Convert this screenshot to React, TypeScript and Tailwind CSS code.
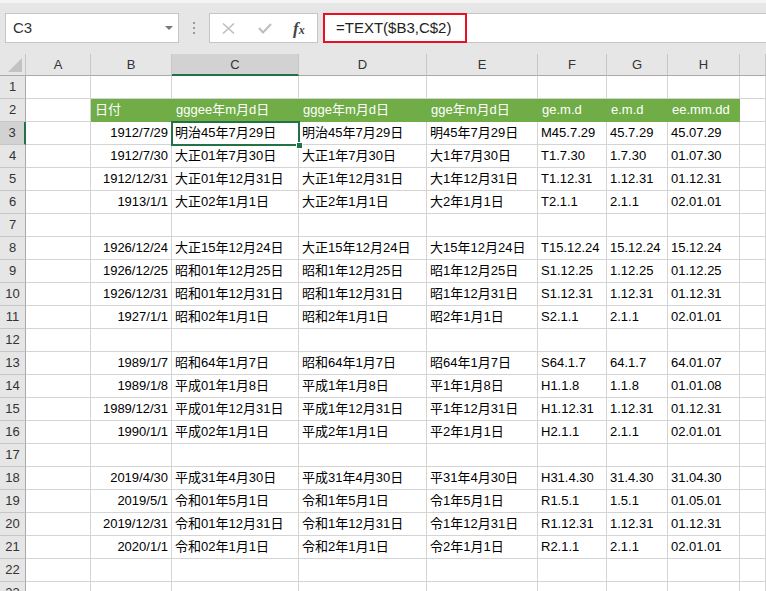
import React from "react";

const FONT = '"Liberation Sans", "Noto Sans CJK JP", sans-serif';

const header = ["日付", "gggee年m月d日", "ggge年m月d日", "gge年m月d日", "ge.m.d", "e.m.d", "ee.mm.dd"];

const data: (string[] | null)[] = [
  ["1912/7/29", "明治45年7月29日", "明治45年7月29日", "明45年7月29日", "M45.7.29", "45.7.29", "45.07.29"],
  ["1912/7/30", "大正01年7月30日", "大正1年7月30日", "大1年7月30日", "T1.7.30", "1.7.30", "01.07.30"],
  ["1912/12/31", "大正01年12月31日", "大正1年12月31日", "大1年12月31日", "T1.12.31", "1.12.31", "01.12.31"],
  ["1913/1/1", "大正02年1月1日", "大正2年1月1日", "大2年1月1日", "T2.1.1", "2.1.1", "02.01.01"],
  null,
  ["1926/12/24", "大正15年12月24日", "大正15年12月24日", "大15年12月24日", "T15.12.24", "15.12.24", "15.12.24"],
  ["1926/12/25", "昭和01年12月25日", "昭和1年12月25日", "昭1年12月25日", "S1.12.25", "1.12.25", "01.12.25"],
  ["1926/12/31", "昭和01年12月31日", "昭和1年12月31日", "昭1年12月31日", "S1.12.31", "1.12.31", "01.12.31"],
  ["1927/1/1", "昭和02年1月1日", "昭和2年1月1日", "昭2年1月1日", "S2.1.1", "2.1.1", "02.01.01"],
  null,
  ["1989/1/7", "昭和64年1月7日", "昭和64年1月7日", "昭64年1月7日", "S64.1.7", "64.1.7", "64.01.07"],
  ["1989/1/8", "平成01年1月8日", "平成1年1月8日", "平1年1月8日", "H1.1.8", "1.1.8", "01.01.08"],
  ["1989/12/31", "平成01年12月31日", "平成1年12月31日", "平1年12月31日", "H1.12.31", "1.12.31", "01.12.31"],
  ["1990/1/1", "平成02年1月1日", "平成2年1月1日", "平2年1月1日", "H2.1.1", "2.1.1", "02.01.01"],
  null,
  ["2019/4/30", "平成31年4月30日", "平成31年4月30日", "平31年4月30日", "H31.4.30", "31.4.30", "31.04.30"],
  ["2019/5/1", "令和01年5月1日", "令和1年5月1日", "令1年5月1日", "R1.5.1", "1.5.1", "01.05.01"],
  ["2019/12/31", "令和01年12月31日", "令和1年12月31日", "令1年12月31日", "R1.12.31", "1.12.31", "01.12.31"],
  ["2020/1/1", "令和02年1月1日", "令和2年1月1日", "令2年1月1日", "R2.1.1", "2.1.1", "02.01.01"],
];

const COLS = ["A", "B", "C", "D", "E", "F", "G", "H", ""];

const cellBase =
  "h-[23px] border-r border-b border-[#d4d4d4] bg-white text-[13px] leading-[22px] whitespace-nowrap overflow-hidden text-black";

function RowHeader({ n }: { n: number }) {
  if (n === 3) {
    return (
      <div className="h-[23px] bg-[#d2d2d2] border-r-2 border-r-[#217346] border-b border-b-[#c6c6c6] text-center text-[13px] leading-[22px] text-[#333]">
        {n}
      </div>
    );
  }
  return (
    <div className="h-[23px] bg-[#e6e6e6] border-r border-r-[#a9a9a9] border-b border-b-[#c6c6c6] text-center text-[13px] leading-[22px] text-[#333]">
      {n}
    </div>
  );
}

function Row({ n }: { n: number }) {
  let vals: string[] | null = null;
  if (n >= 3 && n <= 21) vals = data[n - 3];
  if (n === 2) {
    return (
      <>
        <RowHeader n={n} />
        <div className={cellBase} />
        {header.map((h, i) => (
          <div
            key={i}
            className="h-[23px] border-r border-b border-[#70ad47] bg-[#70ad47] text-white text-[13px] leading-[22px] whitespace-nowrap overflow-hidden pl-[4px]"
          >
            {h}
          </div>
        ))}
        <div className={cellBase} />
      </>
    );
  }
  return (
    <>
      <RowHeader n={n} />
      <div className={cellBase} />
      <div className={`${cellBase} text-right pr-[3px]`}>{vals ? vals[0] : ""}</div>
      <div className={`${cellBase} pl-[3px] ${n === 3 ? "relative overflow-visible" : ""}`}>
        {vals ? vals[1] : ""}
        {n === 3 && (
          <div className="absolute -left-[1px] -top-[1px] w-[129px] h-[25px] border-2 border-[#217346]">
            <div className="absolute -right-[5px] -bottom-[5px] w-[7px] h-[7px] bg-[#217346] border border-white" />
          </div>
        )}
      </div>
      <div className={`${cellBase} pl-[3px]`}>{vals ? vals[2] : ""}</div>
      <div className={`${cellBase} pl-[3px]`}>{vals ? vals[3] : ""}</div>
      <div className={`${cellBase} pl-[3px]`}>{vals ? vals[4] : ""}</div>
      <div className={`${cellBase} pl-[3px]`}>{vals ? vals[5] : ""}</div>
      <div className={`${cellBase} pl-[3px]`}>{vals ? vals[6] : ""}</div>
      <div className={cellBase} />
    </>
  );
}

export default function App() {
  const rowNums = Array.from({ length: 23 }, (_, i) => i + 1);
  return (
    <div className="w-[766px] h-[591px] overflow-hidden bg-white" style={{ fontFamily: FONT }}>
      {/* Formula bar area */}
      <div className="h-[54px] bg-[#e6e6e6]">
        <div className="h-[3px] bg-[#f4f4f4]" />
        <div className="flex items-center mt-[10px] h-[30px]">
          <div className="ml-[5px] w-[174px] h-full bg-white border border-[#c6c6c6] flex items-center justify-between pl-[7px] pr-[5px]">
            <span className="text-[15px] text-[#333]">C3</span>
            <svg width="8" height="4" viewBox="0 0 8 4">
              <polygon points="0,0 8,0 4,4" fill="#777" />
            </svg>
          </div>
          <div className="w-[30px] flex flex-col items-center gap-[3px]">
            <div className="w-[2px] h-[2px] bg-[#9a9a9a]" />
            <div className="w-[2px] h-[2px] bg-[#9a9a9a]" />
            <div className="w-[2px] h-[2px] bg-[#9a9a9a]" />
          </div>
          <div className="w-[109px] h-full bg-white border border-[#c6c6c6] flex items-center pl-[12px]">
            <svg width="13" height="11" viewBox="0 0 13 11">
              <line x1="1" y1="0.5" x2="12" y2="10.5" stroke="#bdbdbd" strokeWidth="1.5" />
              <line x1="12" y1="0.5" x2="1" y2="10.5" stroke="#bdbdbd" strokeWidth="1.5" />
            </svg>
            <svg width="14" height="11" viewBox="0 0 14 11" className="ml-[23px]">
              <polyline points="1,5 5,9.5 13,1" fill="none" stroke="#bdbdbd" strokeWidth="2" />
            </svg>
            <span
              className="ml-[21px] text-[#444] italic leading-none font-bold"
              style={{ fontFamily: '"Liberation Serif", serif' }}
            >
              <span className="text-[17px]">f</span>
              <span className="text-[12px]">x</span>
            </span>
          </div>
          <div className="ml-[5px] flex-1 h-full bg-white border-y border-[#c6c6c6] flex">
            <div className="w-[144px] -my-[1px] h-[30px] border-2 border-[#e81123] pl-[11px] flex items-center text-[15px] text-[#222]">
              =TEXT($B3,C$2)
            </div>
          </div>
        </div>
      </div>

      {/* Grid */}
      <div className="grid grid-cols-[26px_65px_81px_127px_128px_111px_69px_61px_72px_1fr]">
        <div className="h-[22px] bg-[#e6e6e6] border-r border-r-[#c6c6c6] border-b border-b-[#a9a9a9] flex items-start justify-start">
          <svg width="25" height="21" viewBox="0 0 25 21">
            <polygon points="8,18 22,18 22,4" fill="#c2c2c2" />
          </svg>
        </div>
        {COLS.map((c, i) =>
          c === "C" ? (
            <div
              key={i}
              className="h-[22px] bg-[#d2d2d2] border-r border-r-[#c6c6c6] border-b-2 border-b-[#217346] text-center text-[13px] leading-[21px] text-[#333]"
            >
              {c}
            </div>
          ) : (
            <div
              key={i}
              className="h-[22px] bg-[#e6e6e6] border-r border-r-[#c6c6c6] border-b border-b-[#a9a9a9] text-center text-[13px] leading-[21px] text-[#333]"
            >
              {c}
            </div>
          )
        )}
        {rowNums.map((n) => (
          <Row key={n} n={n} />
        ))}
      </div>
    </div>
  );
}
